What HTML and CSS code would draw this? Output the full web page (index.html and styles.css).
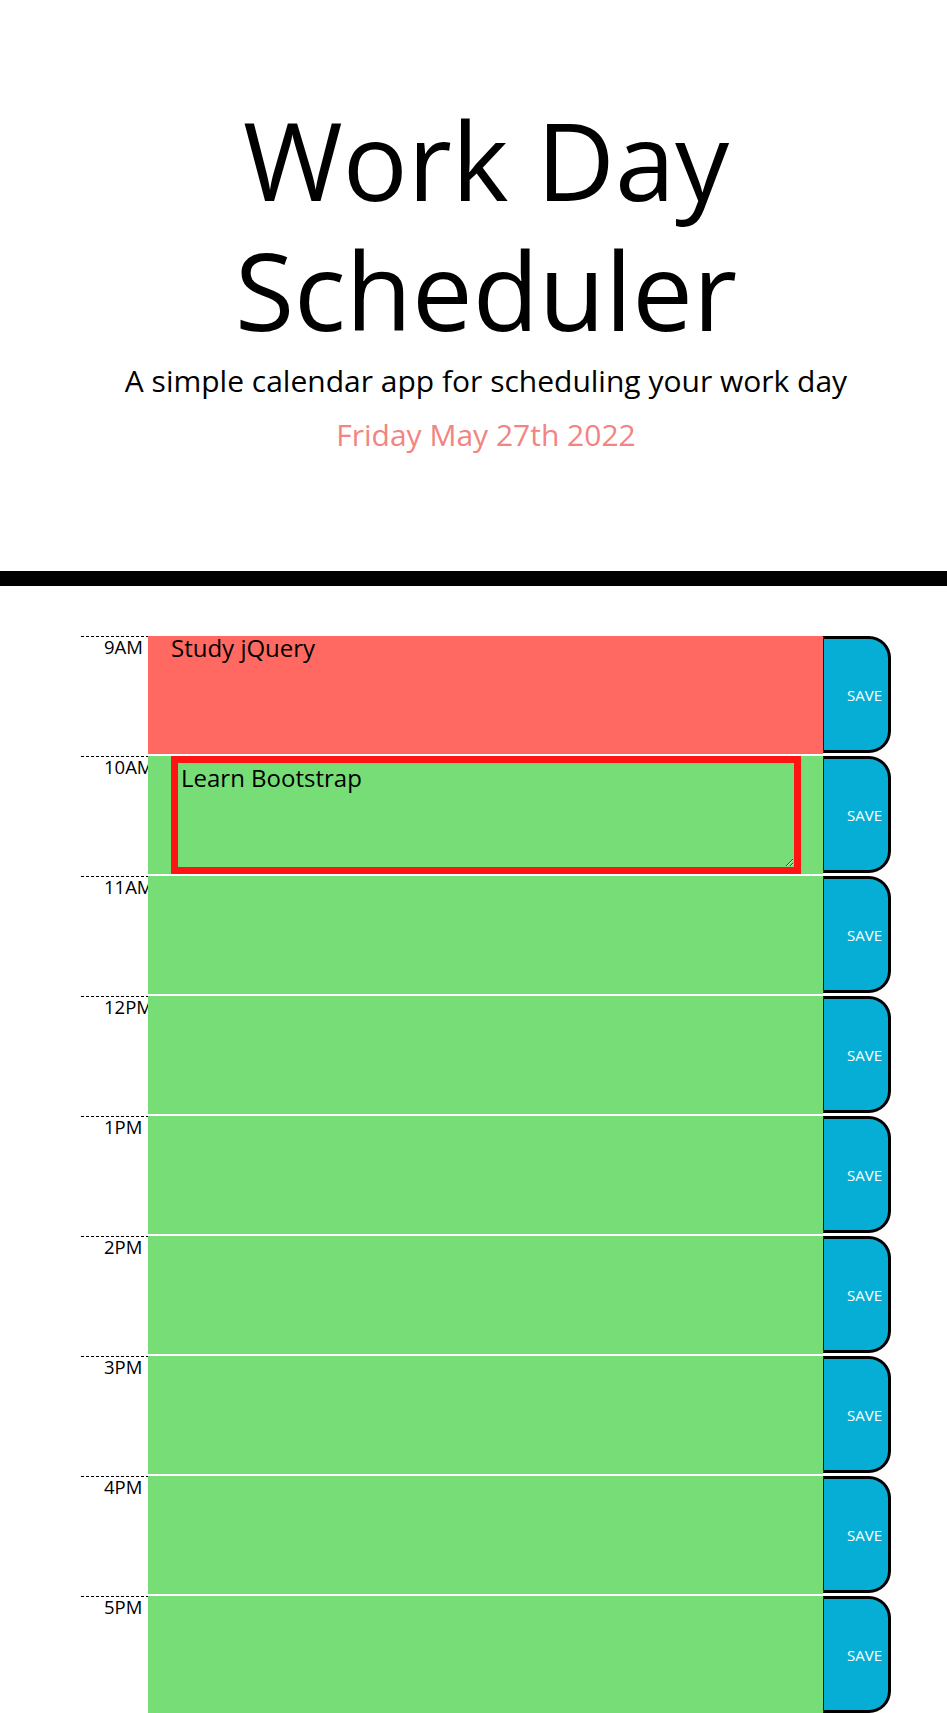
FILE: index.html
```html
<!DOCTYPE html>
<html lang="en">
<head>
<meta charset="utf-8">
<title>Work Day Scheduler</title>
<link rel="stylesheet" href="styles.css">
</head>
<body>
<header class="jumbotron">
  <h1 class="title">Work Day<br>Scheduler</h1>
  <p class="lead">A simple calendar app for scheduling your work day</p>
  <p class="current-day">Friday May 27th 2022</p>
</header>
<main class="schedule">
  <div class="time-row">
    <div class="hour">9AM</div>
    <div class="cell present"><textarea class="description">Study jQuery</textarea></div>
    <button class="save-btn">SAVE</button>
  </div>
  <div class="time-row">
    <div class="hour">10AM</div>
    <div class="cell future"><textarea class="description editing">Learn Bootstrap</textarea></div>
    <button class="save-btn">SAVE</button>
  </div>
  <div class="time-row">
    <div class="hour">11AM</div>
    <div class="cell future"><textarea class="description"></textarea></div>
    <button class="save-btn">SAVE</button>
  </div>
  <div class="time-row">
    <div class="hour">12PM</div>
    <div class="cell future"><textarea class="description"></textarea></div>
    <button class="save-btn">SAVE</button>
  </div>
  <div class="time-row">
    <div class="hour">1PM</div>
    <div class="cell future"><textarea class="description"></textarea></div>
    <button class="save-btn">SAVE</button>
  </div>
  <div class="time-row">
    <div class="hour">2PM</div>
    <div class="cell future"><textarea class="description"></textarea></div>
    <button class="save-btn">SAVE</button>
  </div>
  <div class="time-row">
    <div class="hour">3PM</div>
    <div class="cell future"><textarea class="description"></textarea></div>
    <button class="save-btn">SAVE</button>
  </div>
  <div class="time-row">
    <div class="hour">4PM</div>
    <div class="cell future"><textarea class="description"></textarea></div>
    <button class="save-btn">SAVE</button>
  </div>
  <div class="time-row">
    <div class="hour">5PM</div>
    <div class="cell future"><textarea class="description"></textarea></div>
    <button class="save-btn">SAVE</button>
  </div>
</main>
</body>
</html>
```
FILE: styles.css
```css
* {
  box-sizing: border-box;
}

body {
  margin: 0;
  background: #ffffff;
  color: #000000;
  font-family: "Open Sans", "Noto Sans", sans-serif;
}

.jumbotron {
  text-align: center;
  border-bottom: 15px solid #000000;
  padding-top: 95px;
  padding-bottom: 116px;
  padding-left: 25px;
}

.title {
  margin: 0;
  font-size: 108px;
  font-weight: 400;
  line-height: 130px;
}

.lead {
  margin: 6px 0 0;
  font-size: 30px;
  line-height: 40px;
}

.current-day {
  margin: 14px 0 0;
  font-size: 30px;
  line-height: 40px;
  color: #f38481;
}

.schedule {
  display: flex;
  flex-direction: column;
  gap: 2px;
  padding-top: 50px;
  padding-left: 81px;
  width: 891px;
}

.time-row {
  display: flex;
  height: 118px;
}

.hour {
  width: 67px;
  flex: none;
  overflow: hidden;
  white-space: nowrap;
  text-align: left;
  padding: 2px 0 0 23px;
  font-size: 18.5px;
  line-height: 1;
  background-image: repeating-linear-gradient(90deg, #000000 0 3px, transparent 3px 5px);
  background-size: 100% 1px;
  background-repeat: no-repeat;
}

.cell {
  width: 675px;
  flex: none;
  padding: 0 22px 0 23px;
}

.present {
  background: #ff6961;
}

.future {
  background: #77dd77;
}

.description {
  display: block;
  width: 100%;
  height: 100%;
  margin: 0;
  padding: 0;
  border: none;
  background: transparent;
  resize: none;
  color: #000000;
  font-family: "Open Sans", "Noto Sans", sans-serif;
  font-size: 24px;
  line-height: 1;
  outline: none;
}

.description.editing {
  border: 7px solid #ff1414;
  padding: 3px;
  resize: both;
}

.save-btn {
  width: 68px;
  flex: none;
  height: 117px;
  margin: 0;
  padding: 0 6px 0 0;
  text-align: right;
  background: #06aed5;
  color: #ffffff;
  font-family: "Open Sans", "Noto Sans", sans-serif;
  font-size: 15px;
  border: 3px solid #000000;
  border-left: 1px solid #1a1a1a;
  border-radius: 0 22px 22px 0;
}
```
